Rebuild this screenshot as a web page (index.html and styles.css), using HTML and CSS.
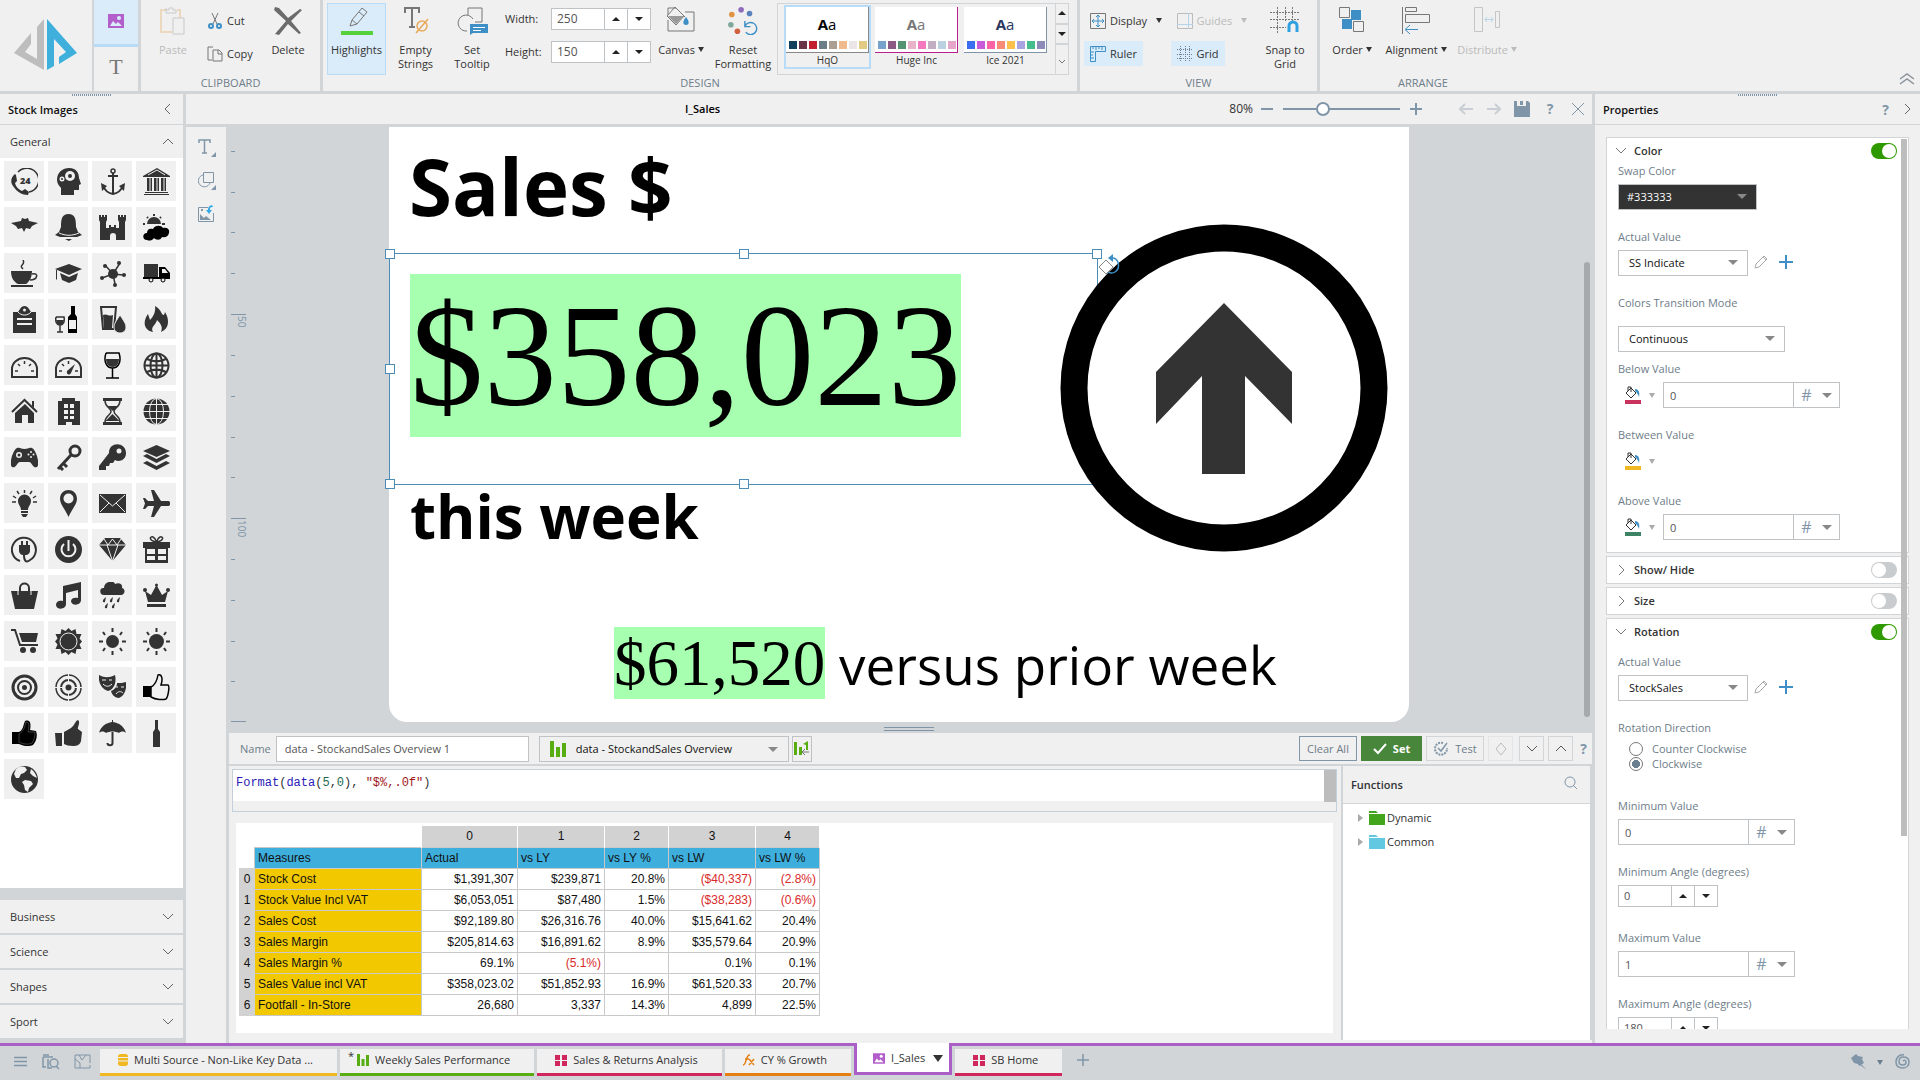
FILE: index.html
```html
<!DOCTYPE html>
<html lang="en">

  <head>
    <meta charset="UTF-8" />
    <title>I_Sales</title>

    <!-- CSS Styling -->
    <link rel="stylesheet" href="styles.css">
  </head>

  <body>

  <!-- Ribbon -->
  <header class="ribbon">
    <div class="logo">
      <svg width="92" height="91" viewBox="0 0 92 91">
        <path fill="#bdbdbd" d="M44 19V70L14 53L31 33V44L25 52L37 59V27z"/>
        <path fill="#3fafdc" d="M47 19L77 53L59 64V57L66 52L54 39V66L47 70z"/>
      </svg>
    </div>
    <div class="modes">
      <button class="mode active" title="Image">
        <svg width="16" height="14" viewBox="0 0 16 14"><path fill="#b35fcb" d="M0 0h16v14H0z"/><path fill="#daebfa" d="M2 12l3-5 3 3 2-2 4 4z"/><circle cx="11" cy="4" r="2" fill="#daebfa"/></svg>
      </button>
      <button class="mode letter" title="Text">T</button>
    </div>

    <section class="group clipboard">
      <div class="tools">
        <button class="tool off">
          <svg width="26" height="28" viewBox="0 0 26 28" fill="none"><path stroke="#ecd9bd" stroke-width="2" d="M6 3H1v22h11M17 3h3v8"/><path stroke="#c9c9c9" d="M6 1v5h10V3h-3V1H9v2H6M13 11h11v16H13z"/></svg>
          Paste
        </button>
        <div class="stack">
          <button class="mini">
            <svg width="16" height="16" viewBox="0 0 16 16" fill="none"><path stroke="#777" d="M5 0l5 11M11 0L6 11"/><g stroke="#3d8fc6" stroke-width="2"><circle cx="4" cy="13" r="2"/><circle cx="12" cy="13" r="2"/></g></svg>
            Cut
          </button>
          <button class="mini">
            <svg width="16" height="16" viewBox="0 0 16 16" fill="none" stroke="#777"><path d="M5 14H1V1h5M6 4h6l3 3v8H6zM11 4v4h4"/></svg>
            Copy
          </button>
        </div>
        <button class="tool delete">
          <svg width="28" height="28" viewBox="0 0 28 28"><path fill="#6b6b6b" d="M1 0l4 1 9 10L26 2l2 1-11 11 10 12-2 1-11-10L5 28l-4-1 11-13L0 3z"/></svg>
          Delete
        </button>
      </div>
      <h2>CLIPBOARD</h2>
    </section>

    <section class="group design">
      <div class="tools">
        <button class="tool highlights active">
          <svg width="34" height="28" viewBox="0 0 34 28" fill="none"><path stroke="#777" d="M10 19l2-6L22 1l5 4L17 17zM12 13l5 4M19 5l5 4"/><path fill="#55d13c" d="M1 24h32v4H1z"/></svg>
          Highlights
        </button>
        <button class="tool empty">
          <svg width="26" height="28" viewBox="0 0 26 28" fill="none"><path stroke="#777" stroke-width="2" d="M2 6V1h14v5M9 1v18M6 20h6"/><circle cx="19" cy="19" r="5" stroke="#e8a85a" stroke-width="1.500"/><path stroke="#e8a85a" stroke-width="1.500" d="M13 26l12-14"/></svg>
          Empty<br>Strings
        </button>
        <button class="tool tip">
          <svg width="32" height="28" viewBox="0 0 32 28" fill="none"><path stroke="#777" d="M12 8V1h14v14h-7M11 24a8 8 0 1 1 6-12"/><path fill="#3d8fc6" d="M14 17h18v9H17l-3 2z"/><path stroke="#fff" d="M17 20.500h12M17 23.500h8"/></svg>
          Set<br>Tooltip
        </button>
        <div class="sizes">
          <label for="width">Width:</label>
          <div class="stepper"><input type="text" id="width" value="250"><button class="up" title="Increase"></button><button class="down" title="Decrease"></button></div>
          <label for="height">Height:</label>
          <div class="stepper"><input type="text" id="height" value="150"><button class="up" title="Increase"></button><button class="down" title="Decrease"></button></div>
        </div>
        <button class="tool canvas-button">
          <svg width="28" height="28" viewBox="0 0 28 28" fill="none"><path stroke="#777" d="M1 13v11h26V5h-9M1 8V1h8l9 9"/><path stroke="#777" d="M8 0l9 9-8 9-9-9z"/><path fill="#999" d="M1 9h16l-8 8z"/><path fill="#3d8fc6" d="M19 10c4 5 3 8 0 8s-4-3 0-8"/></svg>
          <span>Canvas <i class="caret"></i></span>
        </button>
        <button class="tool reset">
          <svg width="32" height="30" viewBox="0 0 32 30"><g><circle cx="14" cy="3" r="3" fill="#8f6bbb"/><circle cx="4" cy="8" r="3" fill="#e09443"/><circle cx="23" cy="7" r="3" fill="#5a82bd"/><circle cx="3" cy="19" r="3" fill="#7fa89b"/><circle cx="10" cy="26" r="3" fill="#d1603f"/></g><path fill="none" stroke="#3d8fc6" stroke-width="1.500" d="M18 15v6h6M18 21a6.500 6.500 0 1 1 1 6"/></svg>
          Reset<br>Formatting
        </button>
        <div class="gallery">
          <button class="theme hqo active">
            <span class="card"><span class="sample"><b>A</b>a</span><span class="chips"><i></i><i></i><i></i><i></i><i></i><i></i><i></i><i></i></span></span>
            HqO
          </button>
          <button class="theme huge">
            <span class="card"><span class="sample"><b>A</b>a</span><span class="chips"><i></i><i></i><i></i><i></i><i></i><i></i><i></i><i></i></span></span>
            Huge Inc
          </button>
          <button class="theme ice">
            <span class="card"><span class="sample"><b>A</b>a</span><span class="chips"><i></i><i></i><i></i><i></i><i></i><i></i><i></i><i></i></span></span>
            Ice 2021
          </button>
          <div class="gallery-nav">
            <button class="up" title="Previous"></button>
            <button class="down" title="Next"></button>
            <button title="More"><svg width="7" height="5" viewBox="0 0 7 5" fill="none" stroke="#777"><path d="M0 1l3 3 3-3"/></svg></button>
          </div>
        </div>
      </div>
      <h2>DESIGN</h2>
    </section>

    <section class="group view">
      <div class="tools">
        <div class="stack">
          <button class="mini">
            <svg width="16" height="16" viewBox="0 0 16 16" fill="none"><path stroke="#777" d="M.5.500h15v15H.5z"/><path stroke="#3d8fc6" d="M8 2v12M2 8h12M6 4l2-2 2 2M6 12l2 2 2-2M4 6L2 8l2 2M12 6l2 2-2 2"/></svg>
            Display <i class="caret"></i>
          </button>
          <button class="mini active">
            <svg width="16" height="16" viewBox="0 0 16 16" fill="none" stroke="#3d8fc6"><path d="M.5.500h15v5h-10v10h-5zM3 1v2M6 1v3M9 1v2M12 1v3M1 6h3M1 9h2M1 12h3"/></svg>
            Ruler
          </button>
        </div>
        <div class="stack second">
          <button class="mini off">
            <svg width="16" height="16" viewBox="0 0 16 16" fill="none"><path stroke="#bbb" d="M.5.500h15v15H.5z"/><path stroke="#b5d4e8" d="M11.500 0v16M0 11.500h16"/></svg>
            Guides <i class="caret"></i>
          </button>
          <button class="mini active">
            <svg width="16" height="16" viewBox="0 0 16 16" fill="none" stroke="#6f8090" stroke-dasharray="1 1"><path d="M0 3.500h16M0 8.500h16M0 12.500h16M3.500 0v16M8.500 0v16M12.500 0v16"/></svg>
            Grid
          </button>
        </div>
        <button class="tool snap">
          <svg width="30" height="28" viewBox="0 0 30 28" fill="none"><path stroke="#777" stroke-dasharray="2 1" d="M7.500 0v26M15.500 0v14M22.500 0v14M0 5.500h30M0 12.500h30M0 20.500h16"/><path stroke="#2fa0e0" stroke-width="3" d="M19 25v-6a4 4 0 0 1 8 0v6"/></svg>
          Snap to<br>Grid
        </button>
      </div>
      <h2>VIEW</h2>
    </section>

    <section class="group arrange">
      <div class="tools">
        <button class="tool order">
          <svg width="26" height="28" viewBox="0 0 26 28"><path fill="#3d8fc6" d="M12 3h10v10H12zM3 12h10v10H3z"/><path fill="#f0f0f0" stroke="#777" d="M.5.500h10v10H.5zM14.500 14.500h10v10h-10z"/></svg>
          <span>Order <i class="caret"></i></span>
        </button>
        <button class="tool align">
          <svg width="28" height="28" viewBox="0 0 28 28" fill="none"><path stroke="#777" d="M.5 0v27M3.500.500h11v4h-11zM3.500 7.500h24v8h-24z"/><path stroke="#3d8fc6" d="M16 22.500H4M8 18l-5 4.500L8 27"/></svg>
          <span>Alignment <i class="caret"></i></span>
        </button>
        <button class="tool distribute off">
          <svg width="28" height="28" viewBox="0 0 28 28" fill="none"><path stroke="#c5c5c5" d="M1.500.500h8v24h-8zM22.500 4.500h4v16h-4z"/><path stroke="#b5d4e8" d="M12 12.500h8M14 10l-2 2.500 2 2.500M18 10l2 2.500-2 2.500"/></svg>
          <span>Distribute <i class="caret"></i></span>
        </button>
      </div>
      <h2>ARRANGE</h2>
    </section>

    <button class="collapse" title="Collapse ribbon"><svg width="16" height="12" viewBox="0 0 16 12" fill="none" stroke="#8a949c" stroke-width="1.500"><path d="M1 6l7-5 7 5M1 11l7-5 7 5"/></svg></button>
  </header>

  <main class="workspace">

    <!-- Stock images -->
    <aside class="stock">
      <div class="panel-head">
        <h1>Stock Images</h1>
        <button title="Collapse"><svg width="8" height="12" viewBox="0 0 8 12" fill="none" stroke="#666"><path d="M6 1L1 6l5 5"/></svg></button>
      </div>
      <button class="section">General <svg width="12" height="8" viewBox="0 0 12 8" fill="none" stroke="#666"><path d="M1 6l5-5 5 5"/></svg></button>
      <div class="tiles">
        <button title="24 hours"><svg viewBox="0 0 27 27"><path class="line" d="M7 4A12 12 0 1 1 18 24" /><path d="M4 6C0 9-1 14 2 18c4 6 9 9 15 9l1-3-4-3-3 2c-4-2-6-4-7-8l2-2-1-6z"/><text x="9" y="16">24</text></svg></button>
        <button title="Ideas"><svg viewBox="0 0 27 27"><path d="M2 12C2 4 8 0 14 0c8 0 10 6 10 10l2 6-2 1v5h-5v5H6v-7c-2-2-4-5-4-8"/><circle class="cut" cx="15" cy="8" r="5"/><circle class="cut" cx="7" cy="11" r="2.500"/><circle cx="15" cy="8" r="2"/><circle cx="7" cy="11" r="1"/></svg></button>
        <button title="Anchor"><svg viewBox="0 0 27 27"><path class="line2" d="M14 5v20M9 8h10M4 18c2 5 5 7 10 8 5-1 8-3 10-8"/><circle class="line" cx="14" cy="3" r="2"/><path d="M2 15l6 3-5 5zM26 15l-6 3 5 5z"/></svg></button>
        <button title="Bank"><svg viewBox="0 0 27 27"><path d="M0 8L14 0l13 8v1H0zM4 10h5v13H4zM11 10h5v13h-5zM18 10h5v13h-5zM2 24h23v1H2zM1 26h25v1H1z"/><path class="cutline" d="M7 10v13M14 10v13M21 10v13M5 7l9-5 8 5"/></svg></button>
        <button title="Bat"><svg viewBox="0 0 27 27"><path d="M0 9l10-2 1-3 3 1 3-1 1 3 9 2-6 3-2 3-4-1-2 4-2-4-4 1-2-3z"/></svg></button>
        <button title="Bell"><svg viewBox="0 0 27 27"><path d="M6 13C6 5 7 0 13.500 0S21 5 21 13l2 5 4 3-5 2H5l-5-2 4-3zM10 25h7l-3 2z"/><path class="cutline" d="M4 19c7 3 13 3 20 0"/></svg></button>
        <button title="Castle"><svg viewBox="0 0 27 27"><path d="M0 1h2v2h1V1h2v2h1V1h2v5L7 8v6h3v-3h2v2h3v-2h2v3h3V8l-1-2V1h2v2h1V1h2v2h1V1h2v5l-1 2v18h-9v-4a3 3 0 0 0-6 0v4H1V8L0 6z"/></svg></button>
        <button title="Cloudy"><svg viewBox="0 0 27 27"><path d="M4 10a7 7 0 0 1 14 0z"/><path class="line2" d="M11 0v2M4 3l1 1M18 3l-1 1M0 10h2M19 10h3"/><path fill="#000" d="M4 26c-5 0-5-7 0-7 0-4 3-5 6-4 2-4 8-4 10-1 4-1 7 1 6 5-1 4-4 5-7 4-2 4-6 3-8 1-2 3-5 3-7 2"/></svg></button>
        <button title="Coffee"><svg viewBox="0 0 27 27"><path d="M0 11h21c0 7-3 11-6 13H7c-4-2-7-6-7-13M0 25h22v2H0z"/><path class="line" d="M21 14c7-2 6 6-2 6M12 9c-5-4 3-4 0-9"/></svg></button>
        <button title="Education"><svg viewBox="0 0 27 27"><path d="M0 9l14-5 13 5-13 6zM5 13l9 4 9-4-2 7-7 3-7-3zM1 10h1v9l-1 1z"/></svg></button>
        <button title="Network"><svg viewBox="0 0 27 27"><circle cx="14" cy="14" r="5"/><path class="line" d="M14 14L6 5M14 14l7-11M14 14l10 1M14 14L3 18M14 14l2 10"/><circle cx="6" cy="6" r="2"/><circle cx="20" cy="3" r="2"/><circle cx="25" cy="15" r="2"/><circle cx="3" cy="18" r="2"/><circle cx="16" cy="25" r="2"/></svg></button>
        <button title="Delivery"><svg viewBox="0 0 27 27"><path d="M1 4h14v13H1z"/><path fill="#000" d="M16 7h6l5 6v6H0v-2h16z"/><path class="cut" d="M19 9h3l3 4h-6z"/><circle class="ring" cx="8" cy="20" r="2"/><circle class="ring" cx="20" cy="20" r="2"/></svg></button>
        <button title="Clipboard"><svg viewBox="0 0 27 27"><path d="M2 6h5l2-3c2-4 7-4 9 0l2 3h5v21H2z"/><circle class="cut" cx="13.500" cy="4" r="1.500"/><path class="cutline" d="M7 6c3 4 10 4 13 0"/><path class="cutline2" d="M6 13h15M6 18h15"/></svg></button>
        <button title="Wine"><svg viewBox="0 0 27 27"><path class="line" d="M1 11h8c1 5-1 8-4 8s-5-3-4-8M5 19v7M2 26h6"/><path d="M1 14h8l-2 5H3z"/><path fill="#000" d="M16 0h4v8l2 3v16h-9V11l3-3z"/><path class="cut" d="M14 14h7v9h-7z"/></svg></button>
        <button title="Water"><svg viewBox="0 0 27 27"><path class="line2" d="M2 1h15l-2 22H4z"/><path d="M4 9c4-2 5 2 10 0l-1 13H5z"/><path class="edge" d="M21 9c4 6 6 9 6 12 0 8-12 8-12 0 0-3 2-6 6-12"/></svg></button>
        <button title="Fire"><svg viewBox="0 0 27 27"><path d="M12 0c7 4 6 9 9 9l1-3c5 8 4 17-4 20 2-5 0-8-4-12-1 5-7 7-4 12C0 24 0 15 5 8l2 6c3-3 6-8 5-14"/></svg></button>
        <button title="Gauge"><svg viewBox="0 0 27 27"><path class="line2" d="M1 25v-8a12.500 11 0 0 1 25 0v8z"/><path class="line" d="M13.500 9v3M7 12l2 2M20 12l-2 2M4 19h3M20 19h3"/></svg></button>
        <button title="Gauge with needle"><svg viewBox="0 0 27 27"><path class="line2" d="M1 25v-8a12.500 11 0 0 1 25 0v8z"/><path class="line" d="M13.500 9v3M7 12l2 2M4 19h3M20 19h3"/><path d="M20 12l-4 9c-2 3-5 1-4-2z"/></svg></button>
        <button title="Glass"><svg viewBox="0 0 27 27"><path fill="none" stroke="#000" stroke-width="1.500" d="M7 1h13c3 9-1 15-6.500 15S4 10 7 1M13.500 16v10M7 26h13"/><path d="M7 7h13c0 5-3 8-6.500 8S7 12 7 7"/></svg></button>
        <button title="Globe outline"><svg viewBox="0 0 27 27"><g class="line2"><circle cx="13.500" cy="13.500" r="12"/><ellipse cx="13.500" cy="13.500" rx="6" ry="12"/><path d="M2 13.500h23M4 7c6 3 13 3 19 0M4 20c6-3 13-3 19 0M13.500 2v23"/></g></svg></button>
        <button title="Home"><svg viewBox="0 0 27 27"><path d="M4 15l10-9 9 9v10h-6v-8h-6v8H4zM21 3h2v7l-2-2z"/><path class="line2" d="M1 14L13.500 2 26 14"/></svg></button>
        <button title="Office"><svg viewBox="0 0 27 27"><path d="M7 0h13v3h5v24h-8v-3h-6v3H3V3h4z"/><path class="cut" d="M9 6h4v4H9zM15 6h4v4h-4zM9 12h4v4H9zM15 12h4v4h-4zM9 18h4v3H9zM15 18h4v3h-4z"/></svg></button>
        <button title="Hourglass"><svg viewBox="0 0 27 27"><path d="M4 0h19v3H4zM4 24h19v3H4zM8 8h11l-5 5zM13.500 16l7 7h-14z"/><path class="line" d="M6 3c0 6 6 7 6 10.500S6 18 6 24M21 3c0 6-6 7-6 10.500s6 4.500 6 10.500"/></svg></button>
        <button title="Globe"><svg viewBox="0 0 27 27"><circle cx="13.500" cy="13.500" r="13"/><g class="cutline"><ellipse cx="13.500" cy="13.500" rx="7" ry="13"/><path d="M0 13.500h27M2 6.500h23M2 20.500h23M13.500 0v27"/></g></svg></button>
        <button title="Game"><svg viewBox="0 0 27 27"><path d="M6 4c3-1 4 1 7.500 1S18 3 21 4c5 3 8 17 5 19-4 2-5-5-8-5H9c-3 0-4 7-8 5C-2 21 1 7 6 4"/><circle class="cut" cx="8" cy="11" r="3"/><circle cx="8" cy="11" r="1.500"/><g class="cut"><circle cx="20" cy="8" r="1"/><circle cx="20" cy="13" r="1"/><circle cx="17.500" cy="10.500" r="1"/><circle cx="22.500" cy="10.500" r="1"/></g></svg></button>
        <button title="House key"><svg viewBox="0 0 27 27"><circle class="line3" cx="20" cy="7" r="5"/><path class="line3" d="M16 11L3 25M8 19l4 4M4 22l4 4"/></svg></button>
        <button title="Key"><svg viewBox="0 0 27 27"><path d="M10 9c0-12 17-11 17 0 0 8-8 9-11 7l-2 3h-3l-1 3H7v4H0v-4z"/><circle class="cut" cx="20" cy="7" r="2.500"/></svg></button>
        <button title="Layers"><svg viewBox="0 0 27 27"><path d="M0 7l13.500-6L27 7l-13.500 6zM0 12l4-2 9.500 5 9.500-5 4 2-13.500 7zM0 19l4-2 9.500 5 9.500-5 4 2-13.500 7z"/></svg></button>
        <button title="Idea"><svg viewBox="0 0 27 27"><path d="M7 11a6.500 6.500 0 0 1 13 0c0 4-3 5-3 9h-7c0-4-3-5-3-9M10 21h7v2h-7zM10 24h7l-2 3h-3z"/><path class="line" d="M13.500 0v3M6 1l2 3M21 1l-2 3M2 6l3 2M25 6l-3 2M1 12h4M22 12h4"/></svg></button>
        <button title="Location"><svg viewBox="0 0 27 27"><path d="M5 9c0-12 17-12 17 0 0 5-5 10-8.500 18C10 19 5 14 5 9"/><circle class="cut" cx="13.500" cy="8.500" r="5"/></svg></button>
        <button title="Mail"><svg viewBox="0 0 27 27"><path d="M0 4h27v19H0z"/><path class="cutline" d="M1 5l12.500 11L26 5M1 22l9-9M26 22l-9-9"/></svg></button>
        <button title="Flights"><svg viewBox="0 0 27 27"><path d="M0 8h2l3 3h6L8 0h3l7 11h7c3 0 3 5 0 5h-7l-7 11H8l3-11H5l-3 3H0l2-5.500z"/></svg></button>
        <button title="Plug"><svg viewBox="0 0 27 27"><path class="line2" d="M9 25A12 12 0 1 1 19 24c-4 3-6 1-6-5"/><path d="M8 9h11v6c0 2-2 4-4 4h-3c-2 0-4-2-4-4zM10 5h2v4h-2zM15 5h2v4h-2z"/></svg></button>
        <button title="Power"><svg viewBox="0 0 27 27"><circle cx="13.500" cy="13.500" r="13.500"/><path class="cutline2" d="M9 8a7 7 0 1 0 9 0M13.500 4v11"/></svg></button>
        <button title="Diamond"><svg viewBox="0 0 27 27"><path d="M6 2h15l6 7-13.500 16L0 9z"/><path class="cutline" d="M0 9h27M8 9l5.500 16L19 9M5 3l4 6 4.500-6L18 9l4-6"/></svg></button>
        <button title="Gift"><svg viewBox="0 0 27 27"><path d="M0 6h27v6H0zM2 12h23v15H2z"/><path class="cut" d="M4 13h8v5H4zM15 13h8v5h-8zM4 20h8v4H4zM15 20h8v4h-8z"/><path class="line" d="M13 6C5 4 7 0 10 1c2 1 3 3 3.500 5C14 4 15 2 17 1c3-1 5 3-3 5"/></svg></button>
        <button title="Bag"><svg viewBox="0 0 27 27"><path d="M0 9h27l-4 18H4z"/><path class="edge" fill="none" d="M7 13V6c0-8 13-8 13 0v7"/><path class="line2" d="M9 12V6c0-6 9-6 9 0v6"/></svg></button>
        <button title="Music"><svg viewBox="0 0 27 27"><path d="M8 4l18-4v18c0 6-10 6-10 1 0-3 4-4 7-3V8l-12 3v11c0 6-10 6-10 1 0-4 4-5 7-4z"/></svg></button>
        <button title="Rain"><svg viewBox="0 0 27 27"><path d="M5 13c-5 0-5-8 0-7 0-7 10-8 11-4 5-2 8 1 7 4 4 1 3 7-1 7zM7 15l-1 5c-3 1-3-2 1-5M14 15l-1 5c-3 1-3-2 1-5M21 15l-1 5c-3 1-3-2 1-5M9 21l-1 5c-3 1-3-2 1-5M16 21l-1 5c-3 1-3-2 1-5"/></svg></button>
        <button title="Crown"><svg viewBox="0 0 27 27"><path d="M5 20L2 9l6 4 5.500-10L19 13l6-4-3 11zM4 22h19v3H4z"/><circle cx="2" cy="8" r="2"/><circle cx="25" cy="8" r="2"/><circle cx="13.500" cy="3" r="1.500"/></svg></button>
        <button title="Cart"><svg viewBox="0 0 27 27"><path class="line2" d="M0 2h4l5 15h18"/><path d="M8 5h19l-2 9H11z"/><circle cx="12" cy="22" r="3"/><circle cx="22" cy="22" r="3"/></svg></button>
        <button title="Sun rays"><svg viewBox="0 0 27 27"><path d="M13.500 0l3 3 4-2 1 5 5 0-2 4.500 2.500 3-2.500 3 2 4.500-5 0-1 5-4-2-3 3-3-3-4 2-1-5-5 0 2-4.500L0 13.500l2.500-3L.5 6l5 0 1-5 4 2z"/><circle class="cutline" cx="13.500" cy="13.500" r="8.500"/></svg></button>
        <button title="Sun"><svg viewBox="0 0 27 27"><circle cx="13.500" cy="13.500" r="6.500"/><path class="line2" d="M13.500 0v4M13.500 23v4M0 13.500h4M23 13.500h4M4 4l2 3M23 4l-2 3M4 23l2-3M23 23l-2-3"/></svg></button>
        <button title="Bright sun"><svg viewBox="0 0 27 27"><circle cx="13.500" cy="13.500" r="7.500"/><path class="line2" d="M13.500 0v4M13.500 23v4M0 13.500h4M23 13.500h4M4 4l2 3M23 4l-2 3M4 23l2-3M23 23l-2-3"/></svg></button>
        <button title="Target"><svg viewBox="0 0 27 27"><circle class="line3" cx="13.500" cy="13.500" r="11.500"/><circle class="line2" cx="13.500" cy="13.500" r="6.500"/><circle cx="13.500" cy="13.500" r="2.500"/></svg></button>
        <button title="Crosshair"><svg viewBox="0 0 27 27"><circle class="line" cx="13.500" cy="13.500" r="12.500"/><circle class="line2" cx="13.500" cy="13.500" r="7.500"/><path class="cutline" d="M13.500 0v27M0 13.500h27"/><circle cx="13.500" cy="13.500" r="3"/></svg></button>
        <button title="Theatre"><svg viewBox="0 0 27 27"><path d="M0 1c6 3 10 3 16 0 2 9-2 15-7 16C3 15-1 9 0 1M18 9c3 0 6 0 9-1 1 8-2 14-7 16-4 0-7-3-8-7 3-1 6-4 6-8"/><path class="cutline" d="M3 6h4M10 6h3M4 10c3 3 6 3 9 0M17 13h2M22 13h3M17 20c2-3 5-3 7-1"/></svg></button>
        <button title="Thumb outline"><svg viewBox="0 0 27 27"><path fill="#000" d="M0 12h8v11H0z"/><path fill="#f0f0f0" stroke="#000" stroke-width="1.500" d="M8 13c4-2 6-6 7-12 4-1 5 4 3 10h7c2 1 0 12-2 14-3 1-10 1-15-2z"/></svg></button>
        <button title="Thumb boxed"><svg viewBox="0 0 27 27"><path fill="#000" d="M1 12h7c4-2 4-6 6-11 6-2 6 4 5 9l6 1c2 5 0 11-3 14-4 2-10 1-14-1H1z"/><path fill="none" stroke="#777" stroke-width=".5" d="M8 14c5-3 6-8 7-12 4 0 3 5 2 10h7c0 5-1 8-3 11-4 2-9 1-13-1z"/></svg></button>
        <button title="Thumb up"><svg viewBox="0 0 27 27"><path d="M0 13h7v13H1zM9 12l7-4c4-3 4-7 7-8 3 2-1 8 0 9l4 3-1 9c-1 4-4 5-8 5s-7-1-9-2z"/></svg></button>
        <button title="Umbrella"><svg viewBox="0 0 27 27"><path d="M0 13C2 6 7 3 13 2V0h1v2c6 1 11 4 13 11-2-2-5-2-7 0-4-2-9-2-13 0-2-2-5-2-7 0"/><path class="line2" d="M13.500 12v11c0 3-5 3-5 0"/></svg></button>
        <button title="Bottle"><svg viewBox="0 0 27 27"><path d="M12 0h3v9l2 3v15h-7V12l2-3z"/></svg></button>
        <button title="Earth"><svg viewBox="0 0 27 27"><circle cx="13.500" cy="13.500" r="13.500"/><path class="cut" d="M5 3c3-3 7-3 9-2l2 3-3 3-3 1-2 4-3 0-2-4zM14 14l6 1 2 3-4 4-1 4-3-2-1-5-2-3zM20 3c4 3 5 6 6 9l-4-2-3-3z"/></svg></button>
      </div>
      <div class="sections">
        <button class="section">Business <svg width="12" height="8" viewBox="0 0 12 8" fill="none" stroke="#666"><path d="M1 1l5 5 5-5"/></svg></button>
        <button class="section">Science <svg width="12" height="8" viewBox="0 0 12 8" fill="none" stroke="#666"><path d="M1 1l5 5 5-5"/></svg></button>
        <button class="section">Shapes <svg width="12" height="8" viewBox="0 0 12 8" fill="none" stroke="#666"><path d="M1 1l5 5 5-5"/></svg></button>
        <button class="section">Sport <svg width="12" height="8" viewBox="0 0 12 8" fill="none" stroke="#666"><path d="M1 1l5 5 5-5"/></svg></button>
      </div>
    </aside>

    <section class="editor">
      <div class="editor-head">
        <h1>I_Sales</h1>
        <label for="zoom">80%</label>
        <button class="minus" title="Zoom out"><svg width="12" height="12" viewBox="0 0 12 12" stroke="#8096a8" stroke-width="2"><path d="M0 6h12"/></svg></button>
        <input type="range" id="zoom" min="0" max="100" value="32">
        <button class="plus" title="Zoom in"><svg width="12" height="12" viewBox="0 0 12 12" stroke="#8096a8" stroke-width="2"><path d="M0 6h12M6 0v12"/></svg></button>
        <div class="head-tools">
          <button title="Undo"><svg width="14" height="12" viewBox="0 0 14 12" fill="none" stroke="#c9cfd4" stroke-width="2"><path d="M14 6H1M6 1L1 6l5 5"/></svg></button>
          <button title="Redo"><svg width="14" height="12" viewBox="0 0 14 12" fill="none" stroke="#c9cfd4" stroke-width="2"><path d="M0 6h13M8 1l5 5-5 5"/></svg></button>
          <button title="Save"><svg width="16" height="16" viewBox="0 0 16 16"><path fill="#8096a8" d="M0 0h14l2 2v14H0z"/><path fill="#f0f0f0" d="M3 0h9v5H3z"/><path fill="#8096a8" d="M6 0h3v4H6z"/></svg></button>
          <button class="help" title="Help">?</button>
          <button title="Close"><svg width="12" height="12" viewBox="0 0 12 12" stroke="#8096a8"><path d="M0 0l12 12M12 0L0 12"/></svg></button>
        </div>
      </div>

      <div class="editor-body">
        <nav class="palette">
          <button title="Text"><svg width="18" height="18" viewBox="0 0 18 18"><path fill="none" stroke="#8096a8" stroke-width="1.500" d="M1 4V1h11v3M6.500 1v13M4 14h5"/><path fill="#8096a8" d="M18 13v5h-5z"/></svg></button>
          <button title="Shapes"><svg width="18" height="18" viewBox="0 0 18 18"><path fill="none" stroke="#8096a8" d="M5.500.500h10v10h-10zM12 11a6 6 0 1 1-7-8"/><path fill="#8096a8" d="M18 13v5h-5z"/></svg></button>
          <button title="Image"><svg width="18" height="18" viewBox="0 0 18 18"><path fill="none" stroke="#8096a8" d="M10 2.500H.5v14h15V8"/><path fill="#8096a8" d="M2 15V9l4 4 2-2 5 4zM3 4h2v2H3z"/><path fill="#35a8e8" d="M14 0c-4 1-4 4-4 5H8l3 4 3-4h-2c0-2 0-3 3-3z"/></svg></button>
        </nav>

        <div class="work">
          <div class="stage">
            <svg class="ruler" width="30" height="595" viewBox="0 0 30 595" stroke="#8096a8">
              <path d="M5 24.500h4M5 65.500h4M5 105.500h4M5 146.500h4M5 187.500h15M5 228.500h4M5 269.500h4M5 310.500h4M5 350.500h4M5 391.500h15M5 432.500h4M5 473.500h4M5 514.500h4M5 554.500h4M5 594.500h15"/>
              <text transform="translate(12 189) rotate(90)">50</text>
              <text transform="translate(12 393) rotate(90)">100</text>
            </svg>
            <div class="sheet">
              <p class="heading">Sales $</p>
              <div class="selection">
                <span class="value">$358,023</span>
                <i class="handle nw"></i><i class="handle n"></i><i class="handle ne"></i>
                <i class="handle w"></i><i class="handle sw"></i><i class="handle s"></i>
              </div>
              <p class="period">this week</p>
              <svg class="indicator" width="328" height="328" viewBox="0 0 328 328"><circle cx="164" cy="164" r="150" fill="#fff" stroke="#000" stroke-width="27"/><path fill="#333" d="M164 79l68 69v52l-47-48v98h-43v-98l-46 48v-52z"/></svg>
              <svg class="rotate" width="22" height="22" viewBox="0 0 22 22" fill="none"><path stroke="#3d8fc6" stroke-width="1.500" d="M12 4c8-1 10 10 4 14-3 2-5 1-7 0"/><path fill="#3d8fc6" d="M14 0v8L9 4z"/><path fill="#fff" stroke="#888" d="M7 6l7 7-7 7-7-7z"/></svg>
              <p class="change"><span>$61,520</span> versus prior week</p>
            </div>
            <div class="stage-scroll"></div>
          </div>
          <div class="splitter"><i></i></div>

          <!-- Data source and formula -->
          <div class="data">
            <div class="data-bar">
              <label for="name">Name</label>
              <input type="text" id="name" value="data - StockandSales Overview 1">
              <div class="source drop">
                <svg width="17" height="16" viewBox="0 0 17 16" fill="#57ad12"><path d="M0 0h4v16H0zM6 6h4v10H6zM12 2h4v14h-4z"/></svg>
                <select aria-label="Source"><option>data - StockandSales Overview</option></select>
              </div>
              <button class="swap" title="Change source"><svg width="16" height="16" viewBox="0 0 16 16"><path fill="#57ad12" d="M0 1h3v13H0zM5 6h3v8H5zM9 3l5-3v9h-2V4z"/><path stroke="#777" fill="none" d="M15 11H9M11 8l-3 3 3 3"/></svg></button>
              <div class="data-actions">
                <button class="clear">Clear All</button>
                <button class="set"><svg width="14" height="12" viewBox="0 0 14 12" fill="none" stroke="#fff" stroke-width="2"><path d="M1 6l4 4 8-9"/></svg>Set</button>
                <button class="test"><svg width="16" height="16" viewBox="0 0 16 16" fill="none" stroke="#8096a8"><path stroke-width="2" stroke-dasharray="2 1" d="M10 2a6 6 0 1 0 4 5"/><path stroke-width="1.500" d="M5 7l3 3 6-8"/></svg>Test</button>
                <button class="square faint" title="Marker"><svg width="14" height="14" viewBox="0 0 14 14" fill="none" stroke="#bbb"><path d="M7 1l5 6-5 6-5-6z"/></svg></button>
                <button class="square" title="Next"><svg width="12" height="8" viewBox="0 0 12 8" fill="none" stroke="#555"><path d="M1 1l5 5 5-5"/></svg></button>
                <button class="square last" title="Previous"><svg width="12" height="8" viewBox="0 0 12 8" fill="none" stroke="#555"><path d="M1 6l5-5 5 5"/></svg></button>
                <button class="help" title="Help">?</button>
              </div>
            </div>

            <div class="data-body">
              <div class="formula">
                <div class="code"><code><b>Format</b>(<b>data</b>(<i>5</i>,<i>0</i>), <em>"$%,.0f"</em>)</code></div>
                <div class="preview">
                  <table>
                    <thead>
                      <tr class="index"><td></td><td></td><th>0</th><th>1</th><th>2</th><th>3</th><th>4</th></tr>
                      <tr class="names"><td></td><th>Measures</th><th>Actual</th><th>vs LY</th><th>vs LY %</th><th>vs LW</th><th>vs LW %</th></tr>
                    </thead>
                    <tbody>
                      <tr><td>0</td><th>Stock Cost</th><td>$1,391,307</td><td>$239,871</td><td>20.8%</td><td class="neg">($40,337)</td><td class="neg">(2.8%)</td></tr>
                      <tr><td>1</td><th>Stock Value Incl VAT</th><td>$6,053,051</td><td>$87,480</td><td>1.5%</td><td class="neg">($38,283)</td><td class="neg">(0.6%)</td></tr>
                      <tr><td>2</td><th>Sales Cost</th><td>$92,189.80</td><td>$26,316.76</td><td>40.0%</td><td>$15,641.62</td><td>20.4%</td></tr>
                      <tr><td>3</td><th>Sales Margin</th><td>$205,814.63</td><td>$16,891.62</td><td>8.9%</td><td>$35,579.64</td><td>20.9%</td></tr>
                      <tr><td>4</td><th>Sales Margin %</th><td>69.1%</td><td class="neg">(5.1%)</td><td></td><td>0.1%</td><td>0.1%</td></tr>
                      <tr><td>5</td><th>Sales Value incl VAT</th><td>$358,023.02</td><td>$51,852.93</td><td>16.9%</td><td>$61,520.33</td><td>20.7%</td></tr>
                      <tr><td>6</td><th>Footfall - In-Store</th><td>26,680</td><td>3,337</td><td>14.3%</td><td>4,899</td><td>22.5%</td></tr>
                    </tbody>
                  </table>
                </div>
              </div>
              <div class="functions">
                <div class="functions-head">
                  <h2>Functions</h2>
                  <button title="Search"><svg width="14" height="14" viewBox="0 0 14 14" fill="none" stroke="#8096a8"><circle cx="6" cy="6" r="5"/><path d="M9 9l4 4"/></svg></button>
                </div>
                <ul>
                  <li><button><i class="branch"></i><svg width="16" height="14" viewBox="0 0 16 14" fill="#43a51c"><path d="M0 0h7l2 2H0zM0 3h16v11H0z"/></svg>Dynamic</button></li>
                  <li><button><i class="branch"></i><svg width="16" height="14" viewBox="0 0 16 14" fill="#62c8e2"><path d="M0 0h7l2 2H0zM0 3h16v11H0z"/></svg>Common</button></li>
                </ul>
              </div>
            </div>
          </div>
        </div>
      </div>
    </section>

    <!-- Properties -->
    <aside class="properties">
      <div class="panel-head">
        <h1>Properties</h1>
        <button class="help" title="Help">?</button>
        <button title="Collapse"><svg width="8" height="12" viewBox="0 0 8 12" fill="none" stroke="#666"><path d="M2 1l5 5-5 5"/></svg></button>
      </div>
      <div class="cards">
        <section class="prop open color">
          <div class="prop-head"><svg width="12" height="12" viewBox="0 0 12 12" fill="none" stroke="#777"><path d="M1 3l5 5 5-5"/></svg><h2><label for="color-on">Color</label></h2><input type="checkbox" class="toggle" id="color-on" checked></div>
          <div class="field first"><label for="swap">Swap Color</label><div class="drop dark"><select id="swap"><option>#333333</option></select></div></div>
          <div class="field">
            <label for="actual">Actual Value</label>
            <div class="row">
              <div class="drop"><select id="actual"><option>SS Indicate</option></select></div>
              <button class="edit" title="Edit"><svg width="14" height="14" viewBox="0 0 14 14" fill="none" stroke="#aaa"><path d="M1 13l1-4 8-8 3 3-8 8zM9 2l3 3"/></svg></button>
              <button class="add" title="Add"><svg width="14" height="14" viewBox="0 0 14 14" stroke="#3d8fc6" stroke-width="2"><path d="M0 7h14M7 0v14"/></svg></button>
            </div>
          </div>
          <div class="field transition"><label for="transition">Colors Transition Mode</label><div class="drop wide"><select id="transition"><option>Continuous</option></select></div></div>
          <div class="field">
            <label for="below">Below Value</label>
            <div class="row">
              <button class="fill" title="Below color"><svg width="16" height="18" viewBox="0 0 16 18" fill="none"><path stroke="#333" d="M1 7l5-5 5 5-5 5zM3 5V1h3v5"/><path fill="#3d8fc6" d="M10 3c4 0 5 4 4 8-1-3-2-4-4-6z"/><path fill="#c8325c" d="M0 14h16v4H0z"/></svg><i class="caret"></i></button>
              <input type="text" id="below" value="0"><button class="format">#<i class="caret"></i></button>
            </div>
          </div>
          <div class="field">
            <span class="caption">Between Value</span>
            <div class="row">
              <button class="fill" title="Between color"><svg width="16" height="18" viewBox="0 0 16 18" fill="none"><path stroke="#333" d="M1 7l5-5 5 5-5 5zM3 5V1h3v5"/><path fill="#3d8fc6" d="M10 3c4 0 5 4 4 8-1-3-2-4-4-6z"/><path fill="#f0b822" d="M0 14h16v4H0z"/></svg><i class="caret"></i></button>
            </div>
          </div>
          <div class="field">
            <label for="above">Above Value</label>
            <div class="row">
              <button class="fill" title="Above color"><svg width="16" height="18" viewBox="0 0 16 18" fill="none"><path stroke="#333" d="M1 7l5-5 5 5-5 5zM3 5V1h3v5"/><path fill="#3d8fc6" d="M10 3c4 0 5 4 4 8-1-3-2-4-4-6z"/><path fill="#3c8464" d="M0 14h16v4H0z"/></svg><i class="caret"></i></button>
              <input type="text" id="above" value="0"><button class="format">#<i class="caret"></i></button>
            </div>
          </div>
        </section>
        <section class="prop">
          <div class="prop-head"><svg width="12" height="12" viewBox="0 0 12 12" fill="none" stroke="#777"><path d="M4 1l5 5-5 5"/></svg><h2><label for="show-on">Show/ Hide</label></h2><input type="checkbox" class="toggle" id="show-on"></div>
        </section>
        <section class="prop">
          <div class="prop-head"><svg width="12" height="12" viewBox="0 0 12 12" fill="none" stroke="#777"><path d="M4 1l5 5-5 5"/></svg><h2><label for="size-on">Size</label></h2><input type="checkbox" class="toggle" id="size-on"></div>
        </section>
        <section class="prop open rotation">
          <div class="prop-head"><svg width="12" height="12" viewBox="0 0 12 12" fill="none" stroke="#777"><path d="M1 3l5 5 5-5"/></svg><h2><label for="rotation-on">Rotation</label></h2><input type="checkbox" class="toggle" id="rotation-on" checked></div>
          <div class="field first">
            <label for="rotation-value">Actual Value</label>
            <div class="row">
              <div class="drop"><select id="rotation-value"><option>StockSales</option></select></div>
              <button class="edit" title="Edit"><svg width="14" height="14" viewBox="0 0 14 14" fill="none" stroke="#aaa"><path d="M1 13l1-4 8-8 3 3-8 8zM9 2l3 3"/></svg></button>
              <button class="add" title="Add"><svg width="14" height="14" viewBox="0 0 14 14" stroke="#3d8fc6" stroke-width="2"><path d="M0 7h14M7 0v14"/></svg></button>
            </div>
          </div>
          <div class="field direction">
            <span class="caption">Rotation Direction</span>
            <label><input type="radio" name="direction" value="counter">Counter Clockwise</label>
            <label><input type="radio" name="direction" value="clockwise" checked>Clockwise</label>
          </div>
          <div class="field"><label for="min">Minimum Value</label><div class="row"><input type="text" id="min" value="0"><button class="format">#<i class="caret"></i></button></div></div>
          <div class="field"><label for="min-angle">Minimum Angle (degrees)</label><div class="stepper"><input type="text" id="min-angle" value="0"><button class="up" title="Increase"></button><button class="down" title="Decrease"></button></div></div>
          <div class="field"><label for="max">Maximum Value</label><div class="row"><input type="text" id="max" value="1"><button class="format">#<i class="caret"></i></button></div></div>
          <div class="field"><label for="max-angle">Maximum Angle (degrees)</label><div class="stepper"><input type="text" id="max-angle" value="180"><button class="up" title="Increase"></button><button class="down" title="Decrease"></button></div></div>
        </section>
        <div class="prop-scroll"></div>
      </div>
    </aside>
  </main>

  <!-- Tabs -->
  <footer class="tabs">
    <div class="tab-tools">
      <button title="Menu"><svg width="14" height="12" viewBox="0 0 14 12" stroke="#8096a8" stroke-width="1.500"><path d="M0 1.500h13M0 5.500h13M0 9.500h13"/></svg></button>
      <button title="Find content"><svg width="18" height="16" viewBox="0 0 18 16" fill="none" stroke="#8096a8" stroke-width="1.500"><path d="M1 1h6M1 3h10M1 3v10h3M6 5v9h4"/><circle cx="12" cy="9" r="4"/><path d="M14 12l3 3"/></svg></button>
      <button title="Layout"><svg width="18" height="16" viewBox="0 0 18 16" fill="none" stroke="#8096a8"><path d="M6 14H1V1h15v8M1 5l5 4v5h10v-3M5 1l3 5 4-5"/></svg></button>
    </div>
    <button class="tab yellow"><svg width="10" height="12" viewBox="0 0 10 12" fill="#f0b822"><path d="M0 2c0-3 10-3 10 0v1H0zM0 4h10v2.500H0zM0 7.500h10V10c0 3-10 3-10 0z"/></svg>Multi Source - Non-Like Key Data ...</button>
    <button class="tab green"><span class="changed">*</span><svg width="12" height="12" viewBox="0 0 12 12" fill="#57ad12"><path d="M0 0h3v12H0zM4.500 5h3v7h-3zM9 1h3v11H9z"/></svg>Weekly Sales Performance</button>
    <button class="tab pink"><svg width="12" height="11" viewBox="0 0 12 11" fill="#d0265c"><path d="M0 0h5v5H0zM7 0h5v5H7zM0 6h5v5H0zM7 6h5v5H7z"/></svg>Sales &amp; Returns Analysis</button>
    <button class="tab orange"><svg width="12" height="12" viewBox="0 0 12 12" fill="none" stroke="#e57f12" stroke-width="1.500"><path d="M0 11c4 0 2-10 7-10M2 5h4M6 5l5 6M11 5l-5 6"/></svg>CY % Growth</button>
    <button class="tab current"><svg width="12" height="11" viewBox="0 0 16 14"><path fill="#b35fcb" d="M0 0h16v14H0z"/><path fill="#fff" d="M2 12l3-5 3 3 2-2 4 4z"/><circle cx="11" cy="4" r="2" fill="#fff"/></svg>I_Sales<i class="caret"></i></button>
    <button class="tab pink"><svg width="12" height="11" viewBox="0 0 12 11" fill="#d0265c"><path d="M0 0h5v5H0zM7 0h5v5H7zM0 6h5v5H0zM7 6h5v5H7z"/></svg>SB Home</button>
    <button class="new" title="New tab"><svg width="12" height="12" viewBox="0 0 12 12" stroke="#8096a8" stroke-width="1.500"><path d="M0 6h12M6 0v12"/></svg></button>
    <div class="status">
      <button title="Pin"><svg width="16" height="16" viewBox="0 0 16 16" fill="#8096a8"><path d="M0 4l5-4 2 2 5 1-1 2 2 4-5 3-1-2-4-1zM10 10l6 6-7-5z"/></svg><i class="caret"></i></button>
      <button title="Pyramid"><svg width="15" height="15" viewBox="0 0 15 15" fill="none" stroke="#8096a8" stroke-width="1.500"><path d="M9 1C4 0 1 4 1 8s3 6 7 6 6-3 6-6-2-5-6-5-4 3-4 5 2 3 4 3 3-1 3-3-2-2-3-1"/></svg></button>
    </div>
  </footer>

  </body>
</html>
```
FILE: styles.css
```css
* {
  box-sizing: border-box;
}

body {
  display: grid;
  grid-template-rows: 94px 1fr 37px;
  height: 100vh;
  margin: 0;
  overflow: hidden;
  background: #f0f0f0;
  color: #333;
  font: 11px/14px "Open Sans", "Noto Sans", sans-serif;
}

h1, h2, p, ul {
  margin: 0;
  padding: 0;
  list-style: none;
}

h1, h2 {
  font-size: 11px;
  font-weight: 600;
}

button {
  padding: 0;
  border: 0;
  background: none;
  color: inherit;
  font: inherit;
}

svg {
  flex: none;
}

input, select {
  margin: 0;
  padding: 0 8px;
  border: 1px solid #bfc3c6;
  border-radius: 0;
  background: #fff;
  color: #555;
  font: inherit;
}

select {
  appearance: none;
  width: 100%;
  color: #111;
}

.caret {
  display: inline-block;
  border: 3px solid transparent;
  border-top: 5px solid currentColor;
  border-bottom: 0;
  vertical-align: 1px;
}

.help {
  color: #8096a8;
  font-size: 14px;
  font-weight: 700;
}

.off {
  color: #bbb;
}

/* Ribbon */
.ribbon {
  display: flex;
  border-bottom: 3px solid #d1d5d8;
}

.logo {
  width: 94px;
  border-right: 2px solid #d1d5d8;
}

.modes {
  display: flex;
  flex-direction: column;
  width: 47px;
  border-right: 3px solid #d1d5d8;
}

.mode {
  display: flex;
  align-items: center;
  justify-content: center;
  height: 47px;
  border-bottom: 3px solid #d1d5d8;
}

.mode.active {
  padding-bottom: 2px;
  background: #daebfa;
}

.mode.letter {
  height: 44px;
  padding-bottom: 4px;
  border-bottom: 0;
  color: #777;
  font: 22px "Liberation Serif", serif;
}

.group {
  border-right: 3px solid #d1d5d8;
}

.group h2 {
  color: #6e7d89;
  font-weight: 400;
  text-align: center;
}

.tools {
  display: flex;
  height: 76px;
  padding: 3px 4px 0;
}

.clipboard {
  width: 182px;
}

.design {
  width: 757px;
}

.view {
  width: 240px;
}

.arrange {
  width: 206px;
  border: 0;
}

.tool {
  display: flex;
  flex: none;
  flex-direction: column;
  align-items: center;
  width: 56px;
  height: 72px;
  padding-top: 3px;
  border: 1px solid transparent;
  white-space: nowrap;
}

.tool svg {
  height: 28px;
  margin-bottom: 8px;
}

.tool .caret {
  vertical-align: 2px;
}

.active {
  border-color: #b8dcf8;
  background: #daebfa;
}

.delete {
  width: 62px;
}

.highlights, .empty {
  width: 59px;
}

.tip {
  width: 54px;
}

.canvas-button {
  margin-left: 2px;
}

.reset {
  width: 68px;
}

.align {
  width: 72px;
}

.distribute {
  width: 70px;
}

.stack {
  display: flex;
  flex-direction: column;
  gap: 8px;
  padding-top: 5px;
  width: 56px;
}

.mini {
  display: flex;
  align-items: center;
  gap: 4px;
  height: 25px;
  padding: 0 5px;
  border: 1px solid transparent;
  white-space: nowrap;
}

.mini .caret {
  margin-left: 5px;
}

.view .stack {
  align-items: flex-start;
  width: 89px;
}

.sizes {
  display: grid;
  grid-template-columns: 46px 100px;
  row-gap: 11px;
  align-content: start;
  align-items: center;
  padding: 5px 0 0 6px;
}

.stepper {
  display: flex;
  height: 22px;
}

.stepper input {
  width: 54px;
  padding: 0 5px;
}

.sizes input {
  font-size: 12px;
}

.up, .down {
  display: flex;
  align-items: center;
  justify-content: center;
}

.stepper button {
  width: 24px;
  margin-left: -1px;
  border: 1px solid #bfc3c6;
  background: #fff;
}

.up::before, .down::before {
  content: "";
  border: 4px solid transparent;
}

.up::before {
  border-top: 0;
  border-bottom: 4px solid #222;
}

.down::before {
  border-top: 4px solid #222;
  border-bottom: 0;
}

.gallery {
  display: flex;
  gap: 2px;
  width: 292px;
  height: 72px;
  padding-left: 6px;
  border: 1px solid #d1d5d8;
}

.theme {
  width: 87px;
  height: 64px;
  margin-top: 1px;
  padding: 0;
  border: 2px solid transparent;
  font-size: 10px;
}

.theme.active {
  border-color: #b8dcf8;
  background: #f0f0f0;
}

.card {
  display: block;
  height: 46px;
  border-right: 1px solid #888;
  border-bottom: 1px solid #888;
  background: #fff;
}

.sample {
  display: block;
  height: 34px;
  color: #000;
  font-size: 15px;
  line-height: 34px;
}

.huge .sample {
  color: #777;
}

.huge .card {
  border-color: #b8208c;
}

.ice .sample {
  color: #2a3860;
}

.ice .card {
  border-color: #8096a8;
}

.chips {
  display: flex;
  gap: 2px;
  padding-left: 3px;
}

.chips i {
  width: 8px;
  height: 8px;
}

.hqo i:nth-child(1) { background: #123f5c; }
.hqo i:nth-child(2) { background: #683548; }
.hqo i:nth-child(3) { background: #c2202e; }
.hqo i:nth-child(4) { background: #6c7f89; }
.hqo i:nth-child(5) { background: #aa9f90; }
.hqo i:nth-child(6) { background: #efba8e; }
.hqo i:nth-child(7) { background: #ebe5e7; }
.hqo i:nth-child(8) { background: #e2ca82; }
.huge i:nth-child(1) { background: #77a2ca; }
.huge i:nth-child(2) { background: #8c5984; }
.huge i:nth-child(3) { background: #559272; }
.huge i:nth-child(4) { background: #e8b2c8; }
.huge i:nth-child(5) { background: #f478bd; }
.huge i:nth-child(6) { background: #c3afc3; }
.huge i:nth-child(7) { background: #bbd1df; }
.huge i:nth-child(8) { background: #e5a6ca; }
.ice i:nth-child(1) { background: #3c6ff0; }
.ice i:nth-child(2) { background: #c85cd8; }
.ice i:nth-child(3) { background: #fa63a4; }
.ice i:nth-child(4) { background: #f68c78; }
.ice i:nth-child(5) { background: #fcc04c; }
.ice i:nth-child(6) { background: #a7a4e0; }
.ice i:nth-child(7) { background: #45bd8d; }
.ice i:nth-child(8) { background: #8c8bba; }

.gallery-nav {
  display: grid;
  flex: 1;
  margin-left: 4px;
  border-left: 1px solid #d1d5d8;
}

.gallery-nav button {
  border-bottom: 2px solid #d1d5d8;
}

.gallery-nav button:last-child {
  border: 0;
}

.collapse {
  align-self: flex-end;
  margin: 0 5px 3px auto;
}

/* Workspace */
.workspace {
  display: grid;
  grid-template-columns: 186px 1fr 325px;
  min-height: 0;
}

.panel-head {
  display: flex;
  align-items: center;
  gap: 14px;
  height: 31px;
  padding: 2px 11px 0 8px;
  border-bottom: 1px solid #d1d5d8;
  background:
    repeating-linear-gradient(90deg, #8096a8 0 1px, transparent 1px 2px) center top / 40px 2px no-repeat;
  color: #111;
}

.panel-head h1 {
  flex: 1;
}

.stock {
  display: flex;
  flex-direction: column;
  min-height: 0;
  border-right: 3px solid #d1d5d8;
  background: #fff;
}

.stock .panel-head {
  flex: none;
  background-color: #f0f0f0;
}

.section {
  display: flex;
  flex: none;
  align-items: center;
  justify-content: space-between;
  width: 100%;
  height: 33px;
  padding: 0 9px 0 10px;
  background: #f0f0f0;
}

.tiles {
  display: grid;
  grid-template-columns: repeat(4, 40px);
  flex: 1;
  align-content: start;
  gap: 6px 4px;
  min-height: 0;
  padding: 3px 4px;
}

.tiles button {
  display: flex;
  align-items: center;
  justify-content: center;
  height: 40px;
  background: #f0f0f0;
}

.tiles svg {
  width: 27px;
  height: 27px;
  fill: #333;
}

.tiles text {
  font-size: 9px;
  font-weight: 800;
}

.tiles .line, .tiles .line2, .tiles .line3 {
  fill: none;
  stroke: #333;
  stroke-width: 1.5px;
}

.tiles .line2 {
  stroke-width: 2px;
}

.tiles .line3 {
  stroke-width: 3px;
}

.tiles .cut {
  fill: #f0f0f0;
}

.tiles .cutline, .tiles .cutline2 {
  fill: none;
  stroke: #f0f0f0;
}

.tiles .cutline2 {
  stroke-width: 2px;
}

.tiles .edge {
  stroke: #f0f0f0;
}

.tiles .ring {
  fill: #f0f0f0;
  stroke: #000;
}

.sections {
  padding: 12px 0 5px;
  background: #d1d5d8;
}

.sections .section {
  margin-bottom: 2px;
}

.sections .section:last-child {
  margin: 0;
}

.editor {
  display: flex;
  flex-direction: column;
  min-width: 0;
  min-height: 0;
  border-right: 3px solid #d1d5d8;
}

.editor-head {
  display: flex;
  flex: none;
  align-items: center;
  height: 33px;
  padding-right: 6px;
  border-bottom: 3px solid #d1d5d8;
}

.editor-head h1 {
  flex: 1;
  padding-left: 499px;
  color: #000;
}

.editor-head label {
  font-size: 12px;
}

.editor-head button {
  display: flex;
  align-items: center;
  justify-content: center;
}

#zoom {
  appearance: none;
  width: 117px;
  height: 14px;
  margin: 0 10px;
  padding: 0;
  border: 0;
  background: linear-gradient(#8096a8, #8096a8) center / 100% 2px no-repeat;
}

#zoom::-webkit-slider-thumb {
  appearance: none;
  width: 14px;
  height: 14px;
  border: 2px solid #8096a8;
  border-radius: 50%;
  background: #fff;
}

.minus {
  margin-left: 8px;
}

.head-tools {
  display: flex;
  align-items: center;
  gap: 12px;
  margin-left: 36px;
}

.head-tools button {
  width: 16px;
}

.editor-body {
  display: flex;
  flex: 1;
  min-height: 0;
}

.palette {
  display: flex;
  flex: none;
  flex-direction: column;
  align-items: center;
  gap: 15px;
  width: 40px;
  padding: 12px 0 0 2px;
}

.palette button {
  height: 18px;
}

.work {
  display: flex;
  flex: 1;
  flex-direction: column;
  min-width: 0;
  background: #d1d5d8;
}

.stage {
  position: relative;
  flex: 1;
  min-height: 0;
  overflow: hidden;
}

.ruler {
  position: absolute;
  top: 0;
  left: 0;
}

.ruler text {
  fill: #8096a8;
  stroke: none;
  font-size: 10px;
}

/* Items placed freely on the design sheet */
.sheet {
  position: absolute;
  top: 0;
  left: 163px;
  width: 1020px;
  height: 595px;
  border-radius: 0 0 18px 18px;
  background: #fff;
  color: #000;
}

.sheet p, .selection, .indicator, .rotate {
  position: absolute;
  white-space: nowrap;
}

.heading {
  top: 9px;
  left: 20px;
  font-size: 78px;
  font-weight: 700;
  line-height: 100px;
}

.period {
  top: 347px;
  left: 21px;
  font-size: 60px;
  font-weight: 700;
  line-height: 84px;
}

.selection {
  top: 126px;
  left: 0;
  width: 709px;
  height: 232px;
  padding: 20px;
  border: 1px solid #4d8db5;
  line-height: 163px;
}

.value {
  background: #a7ffb0;
  font-family: "Liberation Serif", serif;
  font-size: 147px;
}

.handle {
  position: absolute;
  width: 10px;
  height: 10px;
  border: 1px solid #4d8db5;
  background: #fff;
}

.nw { top: -5px; left: -5px; }
.n { top: -5px; left: 349px; }
.ne { top: -5px; right: -5px; }
.w { top: 110px; left: -5px; }
.sw { bottom: -5px; left: -5px; }
.s { bottom: -5px; left: 349px; }

.indicator {
  top: 97px;
  left: 671px;
}

.rotate {
  top: 127px;
  left: 710px;
}

.change {
  top: 498px;
  left: 225px;
  font-size: 53px;
  line-height: 76px;
}

.change span {
  background: #a7ffb0;
  font-family: "Liberation Serif", serif;
  font-size: 65px;
}

.stage-scroll {
  position: absolute;
  top: 135px;
  right: 2px;
  width: 6px;
  height: 455px;
  border-radius: 3px;
  background: #a6aaad;
}

.splitter {
  display: flex;
  flex: none;
  align-items: flex-end;
  justify-content: center;
  height: 11px;
  padding-bottom: 2px;
}

.splitter i {
  width: 50px;
  height: 4px;
  border: solid #8096a8;
  border-width: 1px 0;
}

/* Data panel */
.data {
  display: flex;
  flex: none;
  flex-direction: column;
  height: 310px;
  margin-left: 3px;
  padding-bottom: 3px;
  background: #f0f0f0;
}

.data-bar {
  display: flex;
  flex: none;
  align-items: center;
  height: 33px;
  padding: 0 2px 0 11px;
  border-bottom: 2px solid #d1d5d8;
  color: #6e7d89;
}

.data-bar label {
  margin-right: 5px;
}

#name {
  width: 253px;
  height: 26px;
}

.drop {
  position: relative;
  width: 130px;
  height: 26px;
}

.drop select {
  height: 26px;
  padding: 0 10px;
}

.drop::after {
  position: absolute;
  top: 10px;
  right: 10px;
  border: 5px solid transparent;
  border-top-color: #888;
  border-bottom: 0;
  content: "";
  pointer-events: none;
}

.source {
  display: flex;
  align-items: center;
  width: 250px;
  margin: 0 3px 0 10px;
  padding-left: 10px;
  border: 1px solid #bfc3c6;
}

.source select {
  height: 24px;
  padding: 0 9px;
  border: 0;
  background: transparent;
}

.swap {
  display: flex;
  align-items: center;
  justify-content: center;
  width: 20px;
  height: 26px;
  border: 1px solid #bfc3c6;
}

.data-actions {
  display: flex;
  align-items: center;
  gap: 4px;
  margin-left: auto;
}

.data-actions button {
  display: flex;
  align-items: center;
  justify-content: center;
  gap: 6px;
  width: 58px;
  height: 25px;
  border: 1px solid #d1d5d8;
}

.data-actions .clear {
  border-color: #8096a8;
}

.data-actions .set {
  width: 61px;
  border: 0;
  background: #47863b;
  color: #fff;
  font-weight: 700;
}

.data-actions .square {
  width: 25px;
}

.data-actions .faint {
  margin-right: 2px;
  border-color: #e2e4e6;
}

.data-actions .help {
  width: 13px;
  border: 0;
}

.data-body {
  display: flex;
  flex: 1;
  min-height: 0;
}

.formula {
  display: flex;
  flex: 1;
  flex-direction: column;
  padding: 3px 4px 7px 3px;
  border-right: 2px solid #d1d5d8;
}

.code {
  height: 43px;
  padding: 5px 3px;
  border: 1px solid #c3d0dc;
  background:
    linear-gradient(#bdbdbd, #bdbdbd) right top / 12px 32px no-repeat,
    linear-gradient(#fff 31px, #f0f0f0 31px);
}

code {
  font: 12px/14px "Liberation Mono", monospace;
}

code b, code i, code em {
  font-style: normal;
  font-weight: 400;
}

code b {
  color: #2a1ab8;
}

code i {
  color: #1a6a50;
}

code em {
  color: #a01818;
}

.preview {
  flex: 1;
  margin: 11px 4px 0;
  padding: 3px;
  background: #fff;
}

table {
  border-collapse: collapse;
  table-layout: fixed;
  width: 580px;
  color: #111;
  font: 12px/14px "Liberation Sans", sans-serif;
}

tr {
  height: 21px;
}

th, td {
  width: 87px;
  padding: 0 3px;
  border: 1px solid #c9c9c9;
  font-weight: 400;
  text-align: right;
}

th:nth-child(1), td:nth-child(1) {
  width: 15px;
  padding: 0;
  border-color: #d2d2d2;
  background: #d2d2d2;
  text-align: center;
}

th:nth-child(2), td:nth-child(2) {
  width: 167px;
}

th:nth-child(3) {
  width: 96px;
}

th:nth-child(5), th:nth-child(7) {
  width: 64px;
}

tbody th {
  background: #f2c800;
  text-align: left;
}

.index th {
  border: solid #fff;
  border-width: 0 1px;
  background: #d2d2d2;
  text-align: center;
}

thead td, thead td:nth-child(1) {
  border: 0;
  background: #fff;
}

.names th {
  background: #3eaedc;
  text-align: left;
}

.neg {
  color: #d82a2a;
}

.functions {
  width: 249px;
  border-right: 2px solid #d1d5d8;
  background: #fff;
}

.functions-head {
  display: flex;
  align-items: center;
  justify-content: space-between;
  height: 38px;
  padding: 0 12px 0 8px;
  border-bottom: 1px solid #d1d5d8;
  background: #f0f0f0;
}

.functions ul {
  padding: 2px 15px;
}

.functions li {
  height: 24px;
}

.functions li button {
  display: flex;
  align-items: center;
  gap: 2px;
  height: 24px;
}

.branch {
  width: 9px;
  border: 4px solid transparent;
  border-right: 0;
  border-left: 5px solid #aaa;
}

/* Properties */
.properties {
  display: flex;
  flex-direction: column;
  min-height: 0;
}

.properties .panel-head {
  flex: none;
  padding-right: 9px;
}

.cards {
  position: relative;
  flex: 1;
  min-height: 0;
  margin: 12px 11px 14px;
  overflow: hidden;
}

.prop {
  height: 28px;
  margin-bottom: 3px;
  padding: 0 11px 0 8px;
  border: 1px solid #d1d5d8;
  background: #fff;
}

.prop.open {
  height: auto;
}

.prop.color {
  height: 416px;
}

.prop-head {
  display: flex;
  align-items: center;
  gap: 7px;
  height: 26px;
}

.prop-head h2 {
  flex: 1;
}

.toggle {
  appearance: none;
  width: 26px;
  height: 16px;
  padding: 1px;
  border: 0;
  border-radius: 8px;
  background: #c9cccf;
}

.toggle::before {
  display: block;
  width: 14px;
  height: 14px;
  border-radius: 50%;
  background: #fff;
  content: "";
}

.toggle:checked {
  background: #2f9a00;
}

.toggle:checked::before {
  margin-left: 10px;
}

.field {
  height: 66px;
  margin-left: 3px;
  color: #6e7d89;
}

.rotation .field {
  height: 66px;
}

.field > label, .caption {
  display: block;
  height: 20px;
}

.rotation .first {
  height: 76px;
  padding-top: 10px;
}

.color .transition > label {
  height: 30px;
}

.row {
  display: flex;
  align-items: center;
  height: 26px;
}

.row input {
  width: 131px;
  height: 26px;
  padding: 0 6px;
}

.drop.dark {
  width: 139px;
}

.drop.wide {
  width: 167px;
}

.dark select {
  padding: 0 8px;
  background: #333;
  color: #fff;
}

.edit {
  margin: 0 11px 0 6px;
}

.row .format {
  width: 47px;
  height: 26px;
  margin-left: -1px;
  border: 1px solid #bfc3c6;
  background: #fff;
  color: #8096a8;
  font-size: 16px;
}

.format .caret {
  margin-left: 10px;
  border-width: 5px 5px 0;
  border-top-color: #888;
  vertical-align: 3px;
}

.fill {
  display: flex;
  align-items: center;
  gap: 8px;
  width: 45px;
  padding-left: 7px;
  color: #aaa;
}

.rotation .direction {
  height: 78px;
}

.direction label {
  display: flex;
  align-items: center;
  gap: 9px;
  height: 15px;
  padding-left: 11px;
}

.direction input {
  appearance: none;
  width: 14px;
  height: 14px;
  padding: 0;
  border: 1px solid #777;
  border-radius: 50%;
}

.direction input:checked {
  background: radial-gradient(#6a7f90 0 4px, #fff 4px);
}

.prop-scroll {
  position: absolute;
  top: 2px;
  right: 2px;
  width: 6px;
  height: 697px;
  background: #bdbdbd;
}

/* Tabs */
.tabs {
  display: flex;
  align-items: flex-start;
  gap: 3px;
  border-top: 3px solid #a95fc5;
  background: #d1d5d8;
}

.tab-tools {
  display: flex;
  align-items: center;
  gap: 14px;
  width: 97px;
  height: 34px;
  padding: 0 0 0 14px;
}

.tab {
  display: flex;
  align-items: center;
  gap: 6px;
  height: 27px;
  margin-top: 3px;
  padding: 0 24px 2px 18px;
  border-bottom: 3px solid;
  background: #f0f0f0;
  white-space: nowrap;
}

.yellow { border-color: #f0b822; }
.green { border-color: #57ad12; padding-left: 8px; }
.pink { border-color: #d0265c; }
.orange { border-color: #e57f12; }

.changed {
  align-self: flex-start;
  margin-right: -3px;
}

.tab.current {
  height: 32px;
  margin-top: -3px;
  padding: 1px 6px 0 16px;
  border: 3px solid #a95fc5;
  border-top: 0;
  background: #fff;
}

.current .caret {
  margin-left: 2px;
  border-width: 7px 5px 0;
}

.new {
  height: 30px;
  margin-left: 12px;
}

.status {
  display: flex;
  align-items: center;
  gap: 12px;
  height: 34px;
  margin-left: auto;
  padding-right: 10px;
  color: #6a7f90;
}

.status .caret {
  margin-left: 10px;
  vertical-align: 5px;
}
```
